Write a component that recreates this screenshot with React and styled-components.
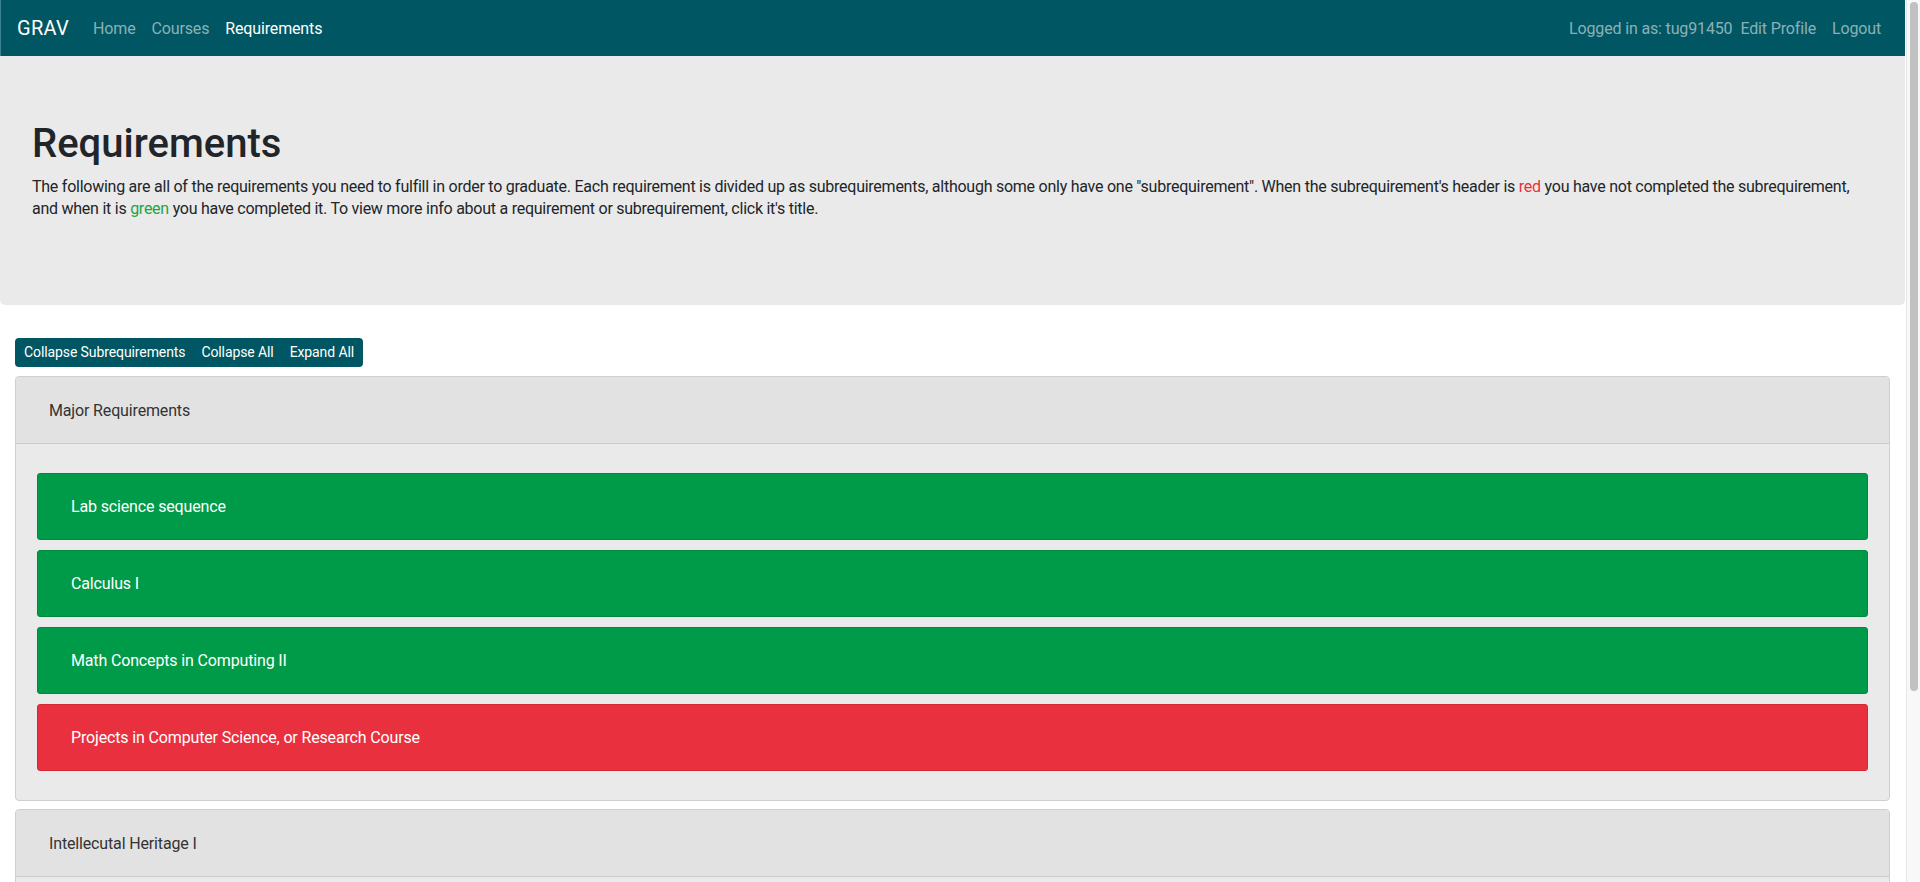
import React from 'react';
import styled, { createGlobalStyle } from 'styled-components';

const GlobalStyle = createGlobalStyle`
  html, body {
    margin: 0;
    padding: 0;
    background: #fff;
  }
  body {
    font-family: Roboto, "Noto Sans", "Liberation Sans", sans-serif;
    font-size: 16px;
    color: #212529;
    letter-spacing: -0.15px;
  }
  ::-webkit-scrollbar {
    width: 0;
  }
`;

const requirements = [
  {
    title: 'Major Requirements',
    subs: [
      { name: 'Lab science sequence', done: true },
      { name: 'Calculus I', done: true },
      { name: 'Math Concepts in Computing II', done: true },
      { name: 'Projects in Computer Science, or Research Course', done: false },
    ],
  },
  {
    title: 'Intellecutal Heritage I',
    subs: [
      { name: 'Intellectual Heritage I: The Good Life', done: true },
    ],
  },
];

function App() {
  return (
    <>
      <GlobalStyle />
      <Page>
        <Navbar>
          <Brand>GRAV</Brand>
          <NavLinks>
            <NavLink>Home</NavLink>
            <NavLink>Courses</NavLink>
            <NavLink active>Requirements</NavLink>
          </NavLinks>
          <NavRight>
            <NavText>Logged in as: tug91450</NavText>
            <NavLink>Edit Profile</NavLink>
            <NavLink>Logout</NavLink>
          </NavRight>
        </Navbar>
        <Jumbotron>
          <Title>Requirements</Title>
          <Lead>
            The following are all of the requirements you need to fulfill in order to graduate. Each requirement is divided up as subrequirements, although some only have one "subrequirement". When the subrequirement's header is <Red>red</Red> you have not completed the subrequirement, and when it is <Green>green</Green> you have completed it. To view more info about a requirement or subrequirement, click it's title.
          </Lead>
        </Jumbotron>
        <Main>
          <ButtonGroup>
            <GroupButton>Collapse Subrequirements</GroupButton>
            <GroupButton>Collapse All</GroupButton>
            <GroupButton>Expand All</GroupButton>
          </ButtonGroup>
          {requirements.map((req) => (
            <Card key={req.title}>
              <CardHeader>{req.title}</CardHeader>
              <CardBody>
                {req.subs.map((sub) => (
                  <SubCard key={sub.name} done={sub.done}>{sub.name}</SubCard>
                ))}
              </CardBody>
            </Card>
          ))}
        </Main>
      </Page>
      <ScrollTrack>
        <ScrollThumb />
      </ScrollTrack>
    </>
  );
}

const Page = styled.div`
  margin-right: 15px;
`;

const ScrollTrack = styled.div`
  position: fixed;
  top: 0;
  right: 0;
  width: 14px;
  height: 100vh;
  background: #f8f8f8;
  border-left: 1px solid #e6e6e6;
  padding: 2px 3px 0 3px;
  box-sizing: border-box;
`;

const ScrollThumb = styled.div`
  width: 8px;
  height: 689px;
  background: #c1c1c1;
  border-radius: 4px;
`;

const Navbar = styled.nav`
  height: 56px;
  box-sizing: border-box;
  background: #005662;
  display: flex;
  align-items: center;
  padding: 0 16px;
  border-left: 1px solid #3d8390;
`;

const Brand = styled.a`
  color: #fff;
  font-size: 20px;
  margin-right: 16px;
  letter-spacing: 0.3px;
`;

const NavLinks = styled.div`
  display: flex;
  flex: 1;
`;

const NavRight = styled.div`
  display: flex;
`;

const NavLink = styled.a`
  color: ${(p) => (p.active ? '#fff' : 'rgba(255, 255, 255, 0.55)')};
  font-size: 16px;
  padding: 0 8px;
`;

const NavText = styled.span`
  color: rgba(255, 255, 255, 0.55);
  font-size: 16px;
`;

const Jumbotron = styled.header`
  background: #eaeaea;
  border-radius: 0 0 5px 5px;
  padding: 64px 32px 85px;
  margin-bottom: 33px;
`;

const Title = styled.h1`
  margin: 0 0 8px;
  font-size: 40px;
  font-weight: 500;
  line-height: 1.2;
  letter-spacing: 0;
`;

const Lead = styled.p`
  margin: 0;
  font-size: 16px;
  line-height: 22px;
  letter-spacing: -0.25px;
`;

const Red = styled.span`
  color: #e9303f;
`;

const Green = styled.span`
  color: #1ea446;
`;

const Main = styled.main`
  padding: 0 15px 48px 15px;
`;

const ButtonGroup = styled.div`
  display: inline-flex;
  background: #005662;
  border-radius: 4px;
  margin-bottom: 9px;
  padding: 0 1px;
`;

const GroupButton = styled.button`
  background: transparent;
  border: 0;
  color: #fff;
  font-family: inherit;
  font-size: 14px;
  line-height: 21px;
  padding: 4px 8px;
  letter-spacing: -0.1px;
`;

const Card = styled.section`
  background: #eaeaea;
  border: 1px solid #cfcfcf;
  border-radius: 4px;
  margin-bottom: 8px;
  overflow: hidden;
`;

const CardHeader = styled.div`
  background: #e2e2e2;
  border-bottom: 1px solid #cbcbcb;
  height: 66px;
  display: flex;
  align-items: center;
  padding: 0 33px;
  color: #333;
  font-size: 16px;
`;

const CardBody = styled.div`
  padding: 29px 21px 29px 21px;
  display: flex;
  flex-direction: column;
  gap: 10px;
`;

const SubCard = styled.div`
  box-sizing: border-box;
  height: 67px;
  display: flex;
  align-items: center;
  padding: 0 33px;
  border-radius: 3px;
  border: 1px solid ${(p) => (p.done ? '#00893f' : '#d42a38')};
  background: ${(p) => (p.done ? '#009b48' : '#e9303f')};
  color: #fff;
  font-size: 16px;
`;

export default App;
